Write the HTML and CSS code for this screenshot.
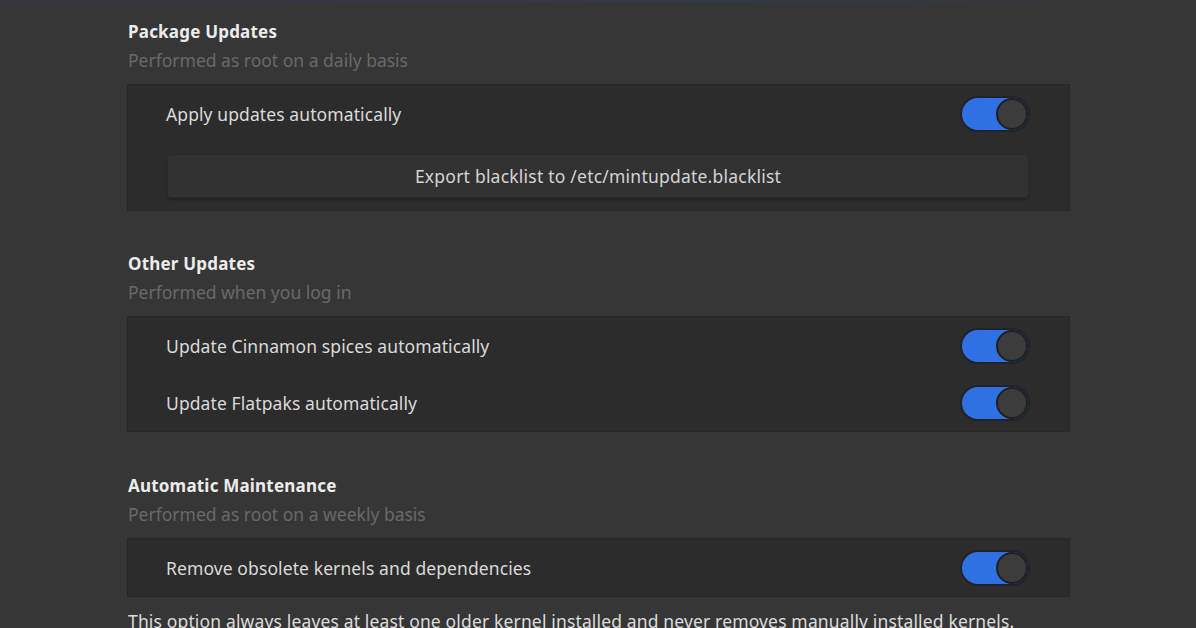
FILE: index.html
```html
<!DOCTYPE html>
<html>
<head>
<meta charset="utf-8">
<link rel="stylesheet" href="styles.css">
</head>
<body>
<div class="topline"></div>
<main class="page">
  <section class="group first">
    <h2 class="title">Package Updates</h2>
    <p class="subtitle">Performed as root on a daily basis</p>
    <div class="frame">
      <div class="row"><span class="label">Apply updates automatically</span><span class="switch"><span class="knob"></span></span></div>
      <div class="btnrow"><button class="btn">Export blacklist to /etc/mintupdate.blacklist</button></div>
    </div>
  </section>
  <section class="group">
    <h2 class="title">Other Updates</h2>
    <p class="subtitle">Performed when you log in</p>
    <div class="frame">
      <div class="row"><span class="label">Update Cinnamon spices automatically</span><span class="switch"><span class="knob"></span></span></div>
      <div class="row"><span class="label">Update Flatpaks automatically</span><span class="switch"><span class="knob"></span></span></div>
    </div>
  </section>
  <section class="group last">
    <h2 class="title">Automatic Maintenance</h2>
    <p class="subtitle">Performed as root on a weekly basis</p>
    <div class="frame">
      <div class="row"><span class="label">Remove obsolete kernels and dependencies</span><span class="switch"><span class="knob"></span></span></div>
    </div>
    <p class="note">This option always leaves at least one older kernel installed and never removes manually installed kernels.</p>
  </section>
</main>
</body>
</html>
```

FILE: styles.css
```css
html, body {
  margin: 0;
  padding: 0;
  background: #363636;
  font-family: "Noto Sans", "Open Sans", sans-serif;
  color: #d8d8d8;
  overflow: hidden;
  height: 628px;
}
.topline {
  height: 2px;
  background: linear-gradient(90deg, #363640, #3a3446 30%, #323a48 60%, #363636);
}
.page {
  width: 943px;
  margin-left: 127px;
}
.group {
  margin-top: 40px;
}
.group.first {
  margin-top: 17px;
}
.group.last {
  margin-top: 41px;
}
.title {
  margin: 0 0 0 1px;
  padding-top: 1px;
  font-size: 17px;
  font-weight: 700;
  letter-spacing: 0.2px;
  line-height: 24px;
  color: #ececec;
}
.subtitle {
  margin: 4px 0 0 1px;
  font-size: 17.5px;
  line-height: 24px;
  color: #696969;
}
.frame {
  margin-top: 12px;
  background: #2c2c2c;
  border: 1px solid #272727;
}
.row {
  height: 57px;
  display: flex;
  align-items: center;
  justify-content: space-between;
  padding: 0 41px 0 38px;
}
.label {
  font-size: 17.5px;
  letter-spacing: 0.1px;
  color: #dadada;
}
.switch {
  position: relative;
  width: 66px;
  height: 32px;
  background: #2f70e2;
  border-radius: 16px;
  box-shadow: 0 0 0 2px #20232a;
}
.knob {
  position: absolute;
  right: 0;
  top: 0;
  width: 28px;
  height: 28px;
  border-radius: 50%;
  background: #3c3c3c;
  border: 2px solid #1f1f1f;
}
.btnrow {
  padding: 12px 40px 12px 39px;
}
.btn {
  display: block;
  width: 100%;
  height: 44px;
  background: #323232;
  border: 1px solid #2a2a2a;
  border-radius: 4px;
  box-shadow: 0 2px 2px #232323;
  color: #d4d4d4;
  font-family: "Noto Sans", "Open Sans", sans-serif;
  font-size: 17.5px;
  letter-spacing: 0.22px;
}
.note {
  margin: 12px 0 0 1px;
  font-size: 17.5px;
  letter-spacing: 0.15px;
  line-height: 24px;
  color: #dcdcdc;
  white-space: nowrap;
}
```
